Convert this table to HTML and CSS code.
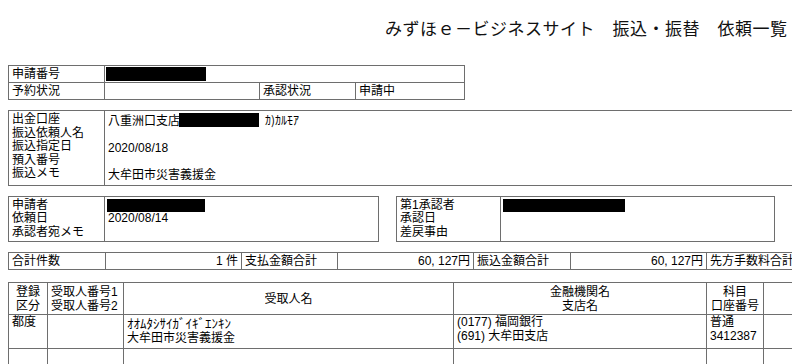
FILE: index.html
```html
<!DOCTYPE html>
<html lang="ja">
<head>
<meta charset="utf-8">
<title>振込・振替 依頼一覧</title>
<link rel="stylesheet" href="styles.css">
</head>
<body>
<div class="title">みずほｅ－ビジネスサイト　振込・振替　依頼一覧</div>

<table class="t t1">
  <colgroup><col class="c96"><col class="c155"><col class="c96"><col class="c109"></colgroup>
  <tr><td>申請番号</td><td colspan="3"><span class="redact r100"></span></td></tr>
  <tr><td>予約状況</td><td></td><td>承認状況</td><td>申請中</td></tr>
</table>

<table class="t t2">
  <colgroup><col class="c96"><col class="c900"></colgroup>
  <tr>
    <td>出金口座<br>振込依頼人名<br>振込指定日<br>預入番号<br>振込メモ</td>
    <td>八重洲口支店<span class="redact r80"></span><span class="kana">ｶ)ｶﾙﾓｱ</span><br>&nbsp;<br>2020/08/18<br>&nbsp;<br>大牟田市災害義援金</td>
  </tr>
</table>

<div class="boxes">
  <table class="t box b1">
    <colgroup><col class="c96"><col class="c274"></colgroup>
    <tr><td>申請者<br>依頼日<br>承認者宛メモ</td><td><span class="redact r98"></span><br>2020/08/14<br>&nbsp;</td></tr>
  </table>
  <table class="t box b2">
    <colgroup><col class="c104"><col class="c274"></colgroup>
    <tr><td>第1承認者<br>承認日<br>差戻事由</td><td><span class="redact r122"></span><br>&nbsp;<br>&nbsp;</td></tr>
  </table>
  <table class="t box b3">
    <colgroup><col class="c104"><col class="c274"></colgroup>
    <tr><td>第2承認者<br>承認日<br>差戻事由</td><td>&nbsp;<br>&nbsp;<br>&nbsp;</td></tr>
  </table>
</div>

<table class="t t4">
  <colgroup><col class="c97"><col class="c136"><col class="c96"><col class="c136"><col class="c97"><col class="c136"><col class="c100"><col class="c136"></colgroup>
  <tr>
    <td>合計件数</td><td class="num">1 件</td>
    <td>支払金額合計</td><td class="num">60, 127円</td>
    <td>振込金額合計</td><td class="num">60, 127円</td>
    <td>先方手数料合計</td><td class="num"></td>
  </tr>
</table>

<table class="t t5">
  <colgroup><col class="c39"><col class="c76"><col class="c330"><col class="c253"><col class="c57"><col class="c112"></colgroup>
  <tr class="head">
    <td class="ctr">登録<br>区分</td>
    <td>受取人番号1<br>受取人番号2</td>
    <td class="ctr mid">受取人名</td>
    <td class="ctr">金融機関名<br>支店名</td>
    <td class="ctr">科目<br>口座番号</td>
    <td class="ctr">支払金額<br>振込金額</td>
  </tr>
  <tr class="row">
    <td>都度</td>
    <td></td>
    <td><span class="kana wide">ｵｵﾑﾀｼｻｲｶﾞｲｷﾞｴﾝｷﾝ</span><br>大牟田市災害義援金</td>
    <td>(0177) 福岡銀行<br>(691) 大牟田支店</td>
    <td>普通<br>3412387</td>
    <td class="num">60, 127円<br>60, 127円</td>
  </tr>
  <tr class="row">
    <td></td><td></td><td></td><td></td><td></td><td></td>
  </tr>
</table>
</body>
</html>
```

FILE: styles.css
```css
html {
  overflow: hidden;
  background: #fff;
}
body {
  margin: 8px;
  font-family: "Liberation Sans", "Noto Sans CJK JP", sans-serif;
  color: #000;
}
.title {
  padding: 8px 0 0 377px;
  height: 24px;
  margin-bottom: 25px;
  font-family: "Noto Sans CJK JP", sans-serif;
  font-size: 17px;
  line-height: 24px;
  letter-spacing: 0.5px;
  white-space: nowrap;
  color: #111;
}
.t {
  border-collapse: collapse;
  table-layout: fixed;
  border: 1px solid #8a8a8a;
  flex: none;
}
.t td {
  border: 1px solid #6e6e6e;
  padding: 0 3px;
  font-size: 12px;
  line-height: 16px;
  vertical-align: top;
  white-space: nowrap;
  overflow: hidden;
}
.c39 { width: 39px; }
.c57 { width: 57px; }
.c76 { width: 76px; }
.c96 { width: 96px; }
.c97 { width: 97px; }
.c100 { width: 100px; }
.c104 { width: 104px; }
.c109 { width: 109px; }
.c112 { width: 112px; }
.c136 { width: 136px; }
.c155 { width: 155px; }
.c253 { width: 253px; }
.c274 { width: 274px; }
.c330 { width: 330px; }
.c900 { width: 900px; }

.t1 { width: 456px; }
.t1 td { height: 16px; }

.t2 { width: 996px; margin-top: 10px; }
.t2 td { line-height: 13.5px; padding-top: 2px; padding-bottom: 2px; }

.boxes {
  display: flex;
  gap: 17px;
  margin-top: 10px;
  width: 1200px;
}
.box td { line-height: 13.5px; padding-top: 2px; padding-bottom: 2px; }
.b1 { width: 370px; }
.b2 { width: 378px; }
.b3 { width: 378px; }

.t4 { width: 934px; margin-top: 10px; }
.t4 td { height: 16px; }
.num { text-align: right; }

.t5 { width: 867px; margin-top: 12px; }
.t5 td { line-height: 13.5px; }
.t5 .head td { height: 27px; padding-top: 3px; padding-bottom: 1px; }
.t5 .row td { height: 31px; padding-top: 1px; padding-bottom: 1px; }
.ctr { text-align: center; }
.t5 .head .mid { vertical-align: middle; }

.redact {
  display: inline-block;
  background: #000;
  height: 14px;
  vertical-align: top;
  margin-top: 1px;
}
.t2 .redact { margin-top: 0; }
.box .redact { margin-top: 0; height: 13px; }
.r100 { width: 100px; margin-left: -2px; }
.r80 { width: 80px; margin-left: -1px; margin-right: 6px; }
.r98 { width: 98px; margin-left: -1px; }
.r122 { width: 122px; margin-left: -1px; }
.kana {
  font-family: "Noto Sans CJK JP", sans-serif;
  font-size: 12px;
}
.kana.wide {
  font-size: 13px;
}
```
